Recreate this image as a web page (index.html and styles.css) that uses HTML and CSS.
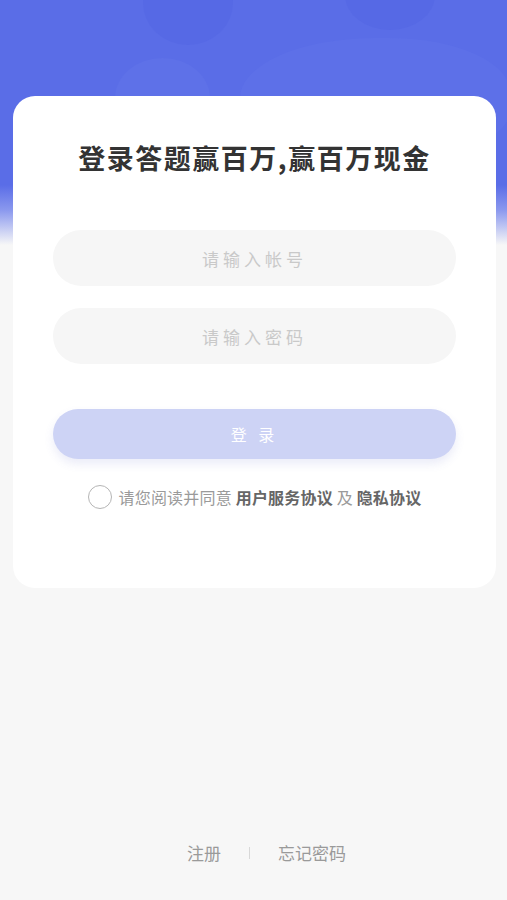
FILE: index.html
```html
<!DOCTYPE html>
<html lang="zh">
<head>
  <meta charset="UTF-8">
  <meta name="viewport" content="width=device-width, initial-scale=1.0">
  <title>登录</title>
  <link rel="stylesheet" href="styles.css">
</head>
<body>

  <div class="page">
    <!-- 顶部背景装饰 -->
    <div class="bg-blobs">
      <span class="blob blob-a"></span>
      <span class="blob blob-b"></span>
      <span class="blob blob-c"></span>
      <span class="blob blob-d"></span>
    </div>

    <div class="card">
      <h1 class="title">登录答题赢百万,赢百万现金</h1>

      <form class="login-form" onsubmit="return false">
        <input class="field" type="text" placeholder="请输入帐号">
        <input class="field" type="password" placeholder="请输入密码">
        <button class="login-btn" type="submit">登 录</button>
      </form>

      <label class="agree">
        <span class="radio"></span>
        <span>请您阅读并同意 <b>用户服务协议</b> 及 <b>隐私协议</b></span>
      </label>
    </div>

    <div class="footer">
      <a href="#">注册</a>
      <span class="sep"></span>
      <a href="#">忘记密码</a>
    </div>
  </div>

</body>
</html>
```

FILE: styles.css
```css
* {
  box-sizing: border-box;
}
body {
  margin: 0;
  font-family: "Noto Sans CJK SC", "Noto Sans", sans-serif;
  background: #f7f7f7;
}
.page {
  position: relative;
  min-height: 100vh;
  display: flex;
  flex-direction: column;
  overflow: hidden;
  background: linear-gradient(#5a6de7 0, #5a6de7 185px, #8a98ee 210px, #f7f7f7 245px);
}
.bg-blobs {
  position: absolute;
  top: 0;
  left: 0;
  right: 0;
  height: 200px;
}
.blob {
  position: absolute;
  border-radius: 50%;
}
.blob-a {
  left: 143px;
  top: -40px;
  width: 90px;
  height: 85px;
  background: #5669e5;
}
.blob-b {
  left: 345px;
  top: -40px;
  width: 90px;
  height: 70px;
  background: #5669e5;
}
.blob-c {
  left: 115px;
  top: 58px;
  width: 95px;
  height: 80px;
  background: #5e71e8;
}
.blob-d {
  left: 240px;
  top: 38px;
  width: 270px;
  height: 120px;
  border-radius: 50% 45% 40% 50%;
  background: #5d70e8;
}
.card {
  position: relative;
  margin: 96px 11px 0 13px;
  background: #fff;
  border-radius: 22px;
  padding: 45px 40px 79px;
  text-align: center;
}
.title {
  margin: 0;
  font-size: 27px;
  line-height: 34px;
  letter-spacing: 1.5px;
  font-weight: 700;
  color: #333;
}
.login-form {
  margin-top: 55px;
  display: flex;
  flex-direction: column;
  gap: 22px;
}
.field {
  height: 56px;
  width: 100%;
  border: none;
  border-radius: 28px;
  background: #f6f6f6;
  text-align: center;
  font-family: inherit;
  font-size: 17px;
  letter-spacing: 4px;
  color: #333;
  outline: none;
}
.field::placeholder {
  color: #c9c9c9;
}
.login-btn {
  margin-top: 23px;
  height: 50px;
  border: none;
  border-radius: 25px;
  background: #cdd3f5;
  color: #fff;
  font-family: inherit;
  font-size: 16px;
  letter-spacing: 4px;
  box-shadow: 0 5px 10px rgba(90, 100, 200, 0.12);
}
.agree {
  margin-top: 26px;
  display: flex;
  align-items: center;
  justify-content: center;
  gap: 7px;
  font-size: 16px;
  letter-spacing: 0.2px;
  line-height: 22px;
  color: #9a9a9a;
}
.agree b {
  font-weight: 600;
  color: #666;
}
.radio {
  width: 24px;
  height: 24px;
  border: 1px solid #b5b5b5;
  border-radius: 50%;
}
.footer {
  margin-top: auto;
  padding: 0 0 37px 26px;
  display: flex;
  justify-content: center;
  align-items: center;
  gap: 28px;
}
.footer a {
  font-size: 17px;
  line-height: 20px;
  color: #9a9a9a;
  text-decoration: none;
}
.sep {
  width: 1px;
  height: 12px;
  background: #d8d8d8;
}
```
